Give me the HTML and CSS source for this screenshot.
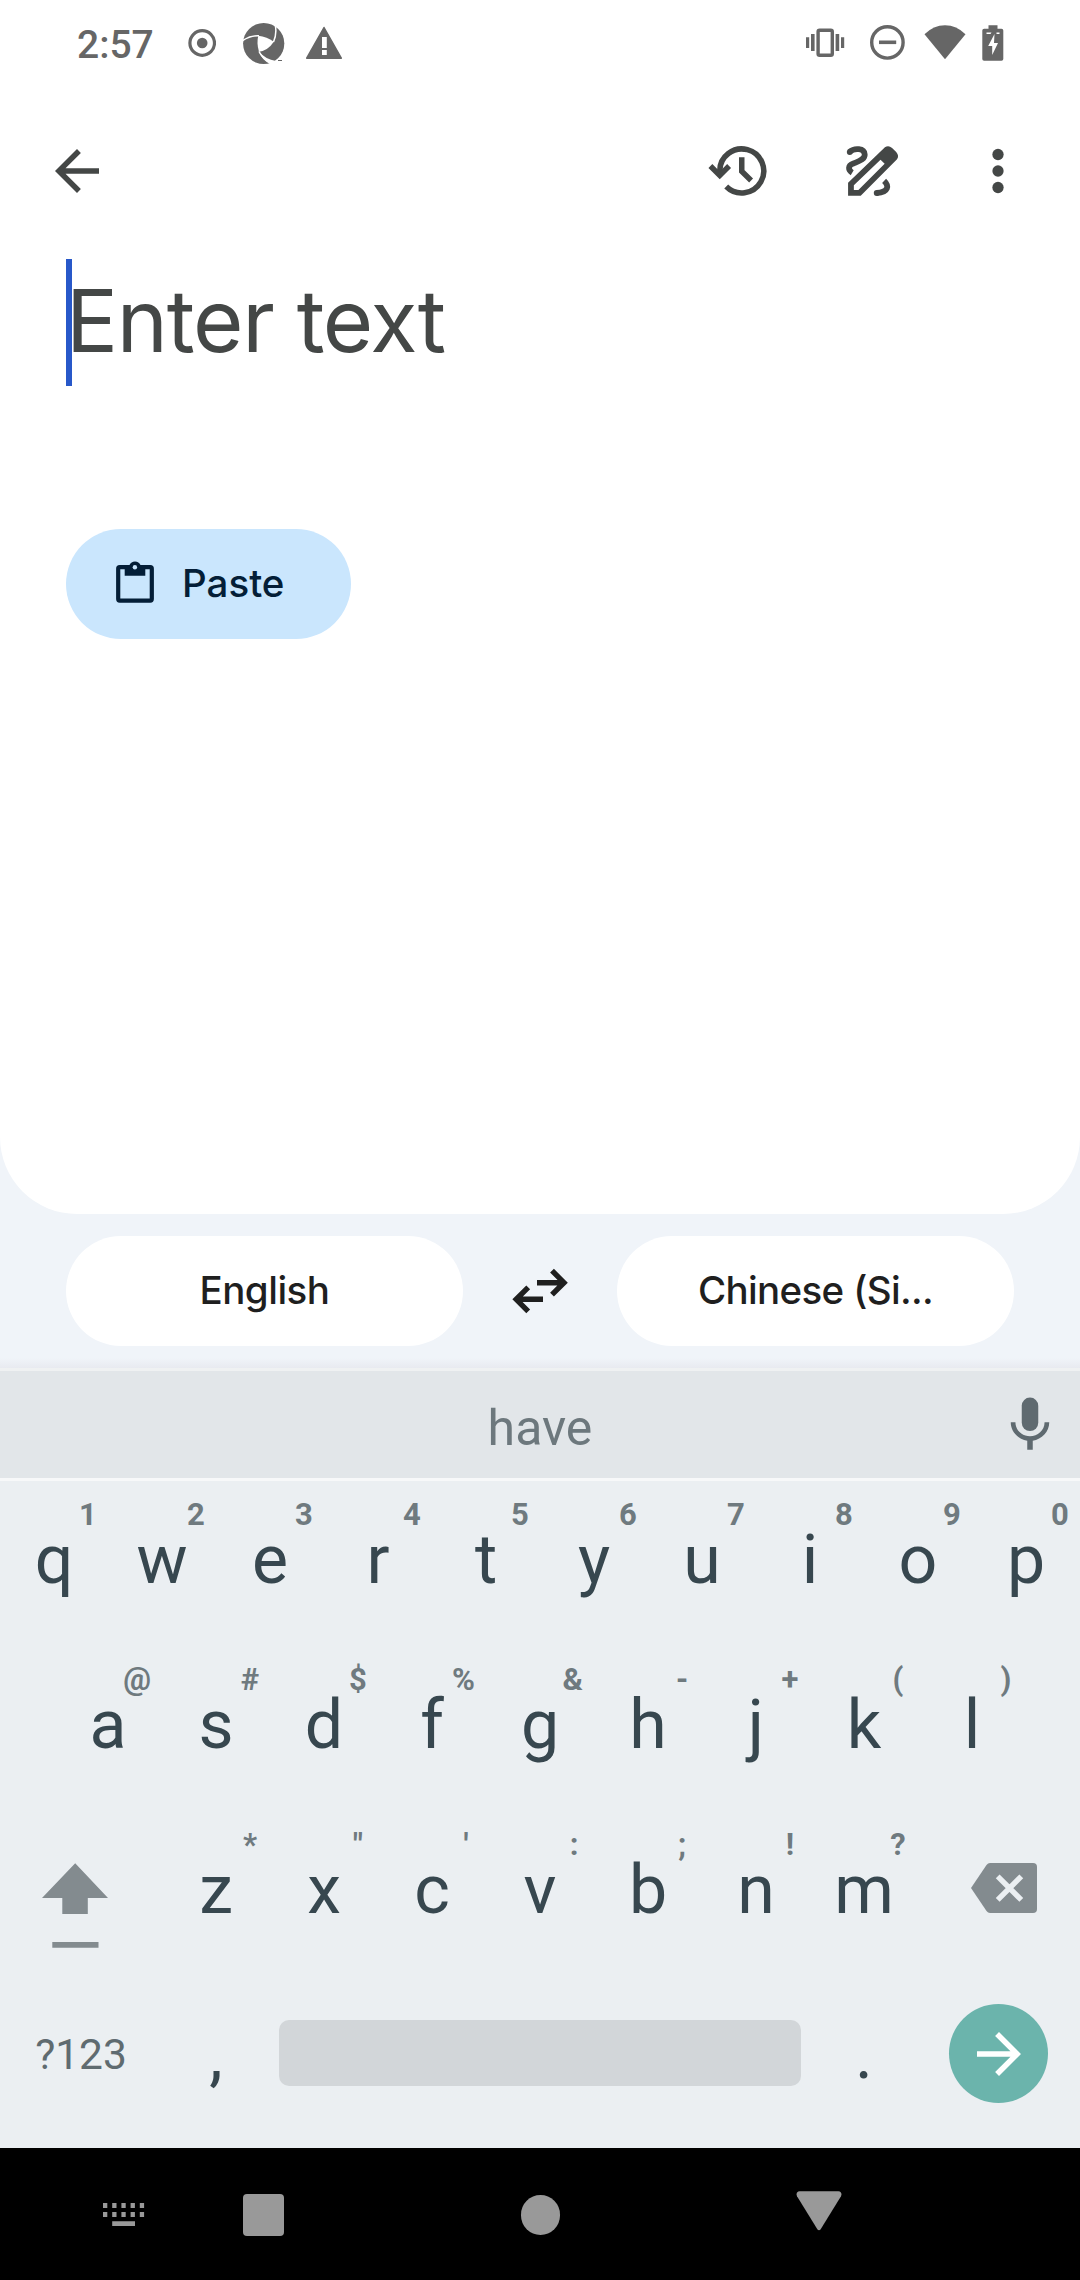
FILE: index.html
```html
<!DOCTYPE html>
<html lang="en">
<head>
<meta charset="utf-8">
<title>Translate</title>
<link rel="stylesheet" href="styles.css">
</head>
<body>
<div class="screen">
  <main class="sheet">
    <div class="status">
      <span class="time">2:57</span>
      <svg width="28" height="44" viewBox="188 21 28 44"><circle cx="202.2" cy="43" r="12.3" fill="none" stroke="#666" stroke-width="3.2"/><circle cx="202.2" cy="43" r="5.3" fill="#666"/></svg>
      <svg class="gap-27" width="42" height="44" viewBox="243 21 42 44"><circle cx="263.7" cy="43.5" r="20.6" fill="#666"/><path d="M258.3 35.7Q267 36.500 273.800 41.700Q268 50.500 259 51.700Q256.300 43 258.300 35.700Z" fill="#fff"/><path d="M273.500 42Q277.300 33 275 24M259 35.800Q250 35.500 242 41M259 51.500Q262.500 59 272 63.500" fill="none" stroke="#fff" stroke-width="1.500"/><path d="M259 51.500Q265.500 59.500 276 61L271 64.500Q262 60.500 259 51.500Z" fill="#fff"/><path d="M278 60.500h4" stroke="#666" stroke-width="1"/></svg>
      <svg class="gap-21" width="36" height="44" viewBox="306 21 36 44"><path d="M324 27.500L341.300 58.200H306.700Z" fill="#666" stroke="#666" stroke-width="1.500" stroke-linejoin="round"/><path d="M322 37h4.800v11h-4.800zM322 50h4.800v5h-4.800z" fill="#fff"/></svg>
      <svg class="push" width="39" height="44" viewBox="806 21 39 44" fill="#666"><rect x="818.100" y="30.200" width="14.200" height="25" rx="1.500" fill="none" stroke="#666" stroke-width="3.400"/><path d="M811 34h3.600v17H811zM806 37.300h3.200V48H806zM835.600 34h3.600v17h-3.600zM841 37.300h3.200V48H841z"/></svg>
      <svg class="gap-25" width="36" height="44" viewBox="870 21 36 44"><circle cx="887.400" cy="42.400" r="15.700" fill="none" stroke="#666" stroke-width="3.400"/><path d="M879 42.300h17.200" stroke="#666" stroke-width="3.600"/></svg>
      <svg class="gap-18" width="42" height="44" viewBox="923.500 21 42 44"><path d="M944.500 59.300L924 34.300Q933 25.300 944.500 25.300T965 34.300Z" fill="#666"/></svg>
      <svg class="gap-16" width="22" height="44" viewBox="981.500 21 22 44"><path d="M988 25.300h9v3.400h4q1.800 0 1.800 1.800v28.400q0 1.800-1.800 1.800h-17.400q-1.800 0-1.800-1.800V30.500q0-1.800 1.800-1.800h4.400z" fill="#666"/><path d="M994 34l-6.300 12h4v9l5.800-12h-4zM986 32.400h5l-1 1.500h-4zM996 32.400h3v1.500h-3z" fill="#fff"/></svg>
    </div>

    <header class="toolbar">
      <svg width="66" height="66" viewBox="0 0 24 24"><path d="M20 11H7.830l5.590-5.590L12 4l-8 8 8 8 1.410-1.410L7.830 13H20z" fill="#444746"/></svg>
      <svg class="push" width="66" height="66" viewBox="0 0 24 24" fill="none" stroke="#444746" stroke-width="2"><path d="M5 13.500V12a8 8 0 1 1 2.350 5.650"/><path d="M1.600 10.200L5 13.600l3.400-3.400"/><path d="M13 7v5.100l3.400 3.350"/></svg>
      <svg class="gap-67" width="66" height="66" viewBox="0 0 24 24"><path fill="#444746" fill-rule="evenodd" d="M3.300 21V16.300L16.700 3.350Q18 2.500 19.300 3.600L20.800 5.100Q22 6.500 21.100 7.700L7.900 21zM5.400 18.950H7.050L16.600 9.400 15.100 7.900 5.400 17.200z"/><g fill="none" stroke="#444746" stroke-width="2.100"><path d="M4.800 12.600C3.300 11.700 3.100 10 5.200 9.300C7 8.500 9.500 7.800 9.350 6C9.200 3.700 5.600 3.500 3.800 5.100"/><path d="M16.400 15.600C18.200 17.300 18.200 19.700 13.700 20"/></g><circle cx="3.900" cy="5.100" r="1.050" fill="#444746"/><circle cx="13.700" cy="20" r="1.050" fill="#444746"/></svg>
      <svg class="gap-60" width="66" height="66" viewBox="0 0 24 24" fill="#444746"><circle cx="12" cy="6" r="2.050"/><circle cx="12" cy="12" r="2.050"/><circle cx="12" cy="18" r="2.050"/></svg>
    </header>

    <div class="input"><span class="caret"></span><span class="placeholder">Enter text</span></div>

    <button class="paste">
      <svg width="38" height="42" viewBox="116 561 38 42"><rect x="118.200" y="567.200" width="33.600" height="33.400" rx="1.500" fill="none" stroke="#041e37" stroke-width="4.200"/><path d="M124.700 565h4.800a6 6 0 0 1 11 0h4.800v10.800h-20.600z" fill="#041e37"/><circle cx="134.900" cy="567.200" r="2.200" fill="#cae6fd"/></svg>
      <span class="paste-label">Paste</span>
    </button>
  </main>

  <div class="languages">
    <button class="lang"><span class="en">English</span></button>
    <svg width="56" height="46" viewBox="512 1268 56 46" fill="none" stroke="#1f1f1f" stroke-width="5.400"><path d="M537 1282.700h26.500M552 1270.700l12 12-12 12M543 1299.300h-26.500M528.200 1287.300l-12 12 12 12"/></svg>
    <button class="lang"><span class="zh">Chinese (Si...</span></button>
  </div>

  <section class="keyboard">
    <div class="suggestions">
      <span></span><span class="word">have</span>
      <svg width="66" height="66" viewBox="0 0 24 24" fill="#5f6a70"><rect x="9" y="2" width="6" height="12.200" rx="3"/><path d="M17.300 11c0 3-2.540 5.100-5.300 5.100S6.700 14 6.700 11H5c0 3.410 2.720 6.230 6 6.720V21h2v-3.280c3.280-.48 6-3.300 6-6.720h-1.700z"/></svg>
    </div>
    <div class="row">
      <div class="key">q<i>1</i></div><div class="key">w<i>2</i></div><div class="key">e<i>3</i></div><div class="key">r<i>4</i></div><div class="key">t<i>5</i></div><div class="key">y<i>6</i></div><div class="key">u<i>7</i></div><div class="key">i<i>8</i></div><div class="key">o<i>9</i></div><div class="key">p<i>0</i></div>
    </div>
    <div class="row">
      <div class="key">a<i>@</i></div><div class="key">s<i>#</i></div><div class="key">d<i>$</i></div><div class="key">f<i>%</i></div><div class="key">g<i>&amp;</i></div><div class="key">h<i>-</i></div><div class="key">j<i>+</i></div><div class="key">k<i>(</i></div><div class="key">l<i>)</i></div>
    </div>
    <div class="row">
      <div class="wide shift"><svg width="66" height="86" viewBox="42 1863 66 86" fill="#838b8f"><path d="M75.200 1863.200L108 1898H87.800v16H62.300v-16H42z"/><path d="M52.300 1942h46.200v5.800H52.300z"/></svg></div>
      <div class="key">z<i>*</i></div><div class="key">x<i>"</i></div><div class="key">c<i>'</i></div><div class="key">v<i>:</i></div><div class="key">b<i>;</i></div><div class="key">n<i>!</i></div><div class="key">m<i>?</i></div>
      <div class="wide erase"><svg width="66" height="50" viewBox="971 1863 66 50"><path d="M990 1863h43q4 0 4 4v42q0 4-4 4h-43q-2 0-3.500-2L971 1888l15.500-23q1.500-2 3.500-2z" fill="#838b8f"/><path d="M997.700 1876.300l23.600 23.600M1021.300 1876.300l-23.600 23.600" stroke="#ebeff2" stroke-width="5.400"/></svg></div>
    </div>
    <div class="row">
      <div class="wide symbols">?123</div>
      <div class="key">,</div>
      <div class="space"></div>
      <div class="key">.</div>
      <div class="wide go"><svg width="66" height="66" viewBox="0 0 24 24"><path d="M4 11h12.170l-5.590-5.590L12 4l8 8-8 8-1.410-1.410L16.170 13H4z" fill="#fff"/></svg></div>
    </div>
  </section>

  <nav class="navbar">
    <svg width="42" height="24" viewBox="103 2203 42 24" fill="#999"><path d="M103 2203h4.300v5H103zm9.200 0h4.300v5h-4.300zm9.200 0h4.300v5h-4.300zm9.200 0h4.300v5h-4.300zm9.200 0h4.300v5h-4.300zM103 2212h4.300v5H103zm9.200 0h4.300v5h-4.300zm9.200 0h4.300v5h-4.300zm9.200 0h4.300v5h-4.300zm9.200 0h4.300v5h-4.300zM112.200 2221.300h22.800v4.700h-22.800z"/></svg>
    <span class="recents"></span>
    <span class="home"></span>
    <svg width="46" height="40" viewBox="795.500 2191 46 40"><path d="M799 2191.300h39q4 .5 2.500 5L820 2229.500q-1.500 1.500-3 0L796.500 2196.300q-1.500-4.500 2.500-5z" fill="#999"/></svg>
  </nav>
</div>
</body>
</html>
```
FILE: styles.css
```css
* { box-sizing: border-box; }
body { margin: 0; background: #f0f4f9; }
svg { display: block; flex: none; }
button { border: 0; padding: 0; font-family: Inter, Roboto, sans-serif; font-size: 38.5px; font-weight: 500; }

.screen { width: 1080px; height: 2280px; display: flex; flex-direction: column; background: #f0f4f9; overflow: hidden; }

.sheet { height: 1214px; background: #fff; border-radius: 0 0 77px 77px; }
.push { margin-left: auto; }
.gap-16 { margin-left: 16px; }
.gap-18 { margin-left: 18px; }
.gap-21 { margin-left: 21px; }
.gap-25 { margin-left: 25px; }
.gap-27 { margin-left: 27px; }
.gap-60 { margin-left: 60px; }
.gap-67 { margin-left: 67px; }

.status { height: 138px; padding: 21px 76.5px 0 77px; display: flex; align-items: flex-start; }
.time { width: 111px; font: 500 39px/49px Roboto, sans-serif; color: #666; }

.toolbar { height: 66px; padding: 0 49px 0 44px; display: flex; }

.input { height: 127px; margin: 55px 0 143px 66px; display: flex; }
.caret { width: 6px; height: 127px; background: #2858c9; }
.placeholder { font: 400 86.6px/123px Inter, Roboto, sans-serif; color: #444746; letter-spacing: -1.25px; margin-left: -6px; white-space: pre; }

.paste { width: 285px; height: 110px; margin-left: 66px; padding-left: 50px; display: flex; align-items: center; gap: 28px; border-radius: 55px; background: #cae6fd; color: #041e37; }
.paste svg { margin-top: -4px; }
.paste-label { padding-bottom: 2px; }

.languages { height: 154px; padding: 22px 66px; display: flex; justify-content: space-between; background: linear-gradient(#f0f4f9 144px, #e8eaf0); }
.languages svg { margin-top: 32px; }
.lang { width: 397px; height: 110px; padding-bottom: 2px; border-radius: 55px; background: #fff; color: #1f1f1f; line-height: 108px; }
.en { letter-spacing: -0.5px; }
.zh { letter-spacing: -0.65px; }

.keyboard { height: 780px; background: #ebeff2; font-family: Roboto, sans-serif; }
.suggestions { height: 113px; border-top: 3px solid #eff1f2; border-bottom: 3px solid #f7f8f9; background: #e2e6e9; padding-right: 17px; display: grid; grid-template-columns: 83px 1fr 66px; align-items: start; }
.suggestions svg { margin-top: 21px; }
.word { text-align: center; font-size: 50px; line-height: 114px; color: #6d787d; }

.row { height: 165px; display: flex; justify-content: center; }
.key { position: relative; width: 108px; text-align: center; font-size: 68px; line-height: 159px; color: #37474f; }
.key i { position: absolute; top: 16px; right: 11px; min-width: 18px; text-align: center; font: 700 31px/36px Roboto, sans-serif; color: #6f7a7f; }
.wide { width: 162px; flex: none; }
.shift { padding: 52px 0 0 42px; }
.erase { padding: 52px 0 0 53px; }
.symbols { text-align: center; font-size: 42.5px; line-height: 157px; color: #5f6b70; }
.space { width: 522px; height: 66px; margin: 44px 9px 0; border-radius: 10px; background: #d2d6d9; }
.go { width: 99px; height: 99px; margin: 28px 32px 0 31px; border-radius: 50%; background: #6bb4ac; display: grid; place-items: center; }

.navbar { height: 132px; background: #000; padding: 43px 238.5px 0 103px; display: flex; align-items: flex-start; }
.navbar svg:first-child { margin-top: 12px; }
.recents { width: 41px; height: 42px; margin: 3px 0 0 98px; border-radius: 4px; background: #999; }
.home { width: 39.5px; height: 39.5px; margin: 4px auto 0 236.5px; border-radius: 50%; background: #999; }
```
